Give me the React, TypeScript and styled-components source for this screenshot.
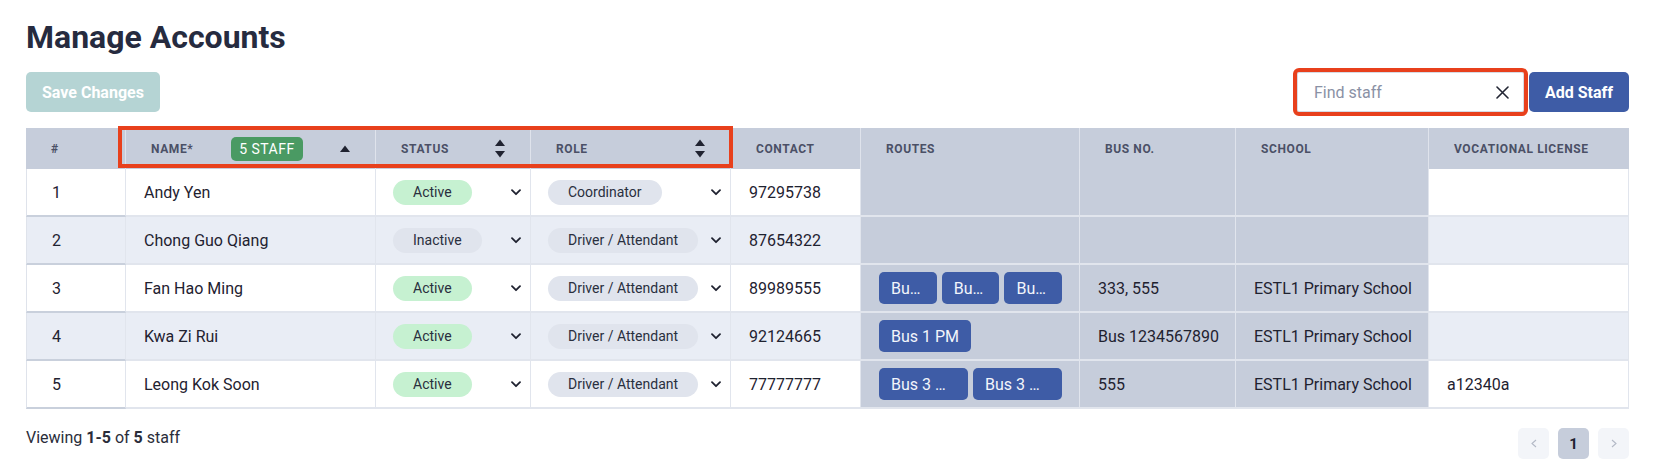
import React from "react";
import styled, { createGlobalStyle } from "styled-components";

const GlobalStyle = createGlobalStyle`
  html, body { margin: 0; padding: 0; background: #ffffff; }
  body {
    font-family: Roboto, "Noto Sans", "Liberation Sans", sans-serif;
    color: #1f2230;
    -webkit-font-smoothing: antialiased;
  }
  * { box-sizing: border-box; }
`;

const COLUMNS = "100px 250px 155px 200px 130px 219px 156px 193px 200px";

const Page = styled.div`
  padding: 18px 28px 0 26px;
  width: 1657px;
`;

const Title = styled.h1`
  margin: 0;
  font-size: 32px;
  line-height: 38px;
  font-weight: 700;
  color: #262b3f;
`;

const Toolbar = styled.div`
  margin-top: 16px;
  height: 40px;
  display: flex;
  align-items: center;
  justify-content: space-between;
`;

const SaveButton = styled.button`
  height: 40px;
  padding: 0 16px;
  border: none;
  border-radius: 5px;
  background: #b5d4d4;
  color: #ffffff;
  font-family: inherit;
  font-size: 16px;
  font-weight: 700;
`;

const ToolGroup = styled.div`
  display: flex;
  align-items: center;
  gap: 5px;
`;

const SearchBox = styled.div`
  width: 227px;
  height: 40px;
  display: flex;
  align-items: center;
  padding: 0 14px 0 16px;
  border: 1px solid #d6dae3;
  border-radius: 2px;
  background: #ffffff;
  outline: 4px solid #e8401c;
  outline-offset: 0;
`;

const SearchInput = styled.input`
  flex: 1;
  min-width: 0;
  border: none;
  outline: none;
  background: transparent;
  font-family: inherit;
  font-size: 16px;
  color: #1f2230;
  padding: 0;
  &::placeholder { color: #8a91a5; }
`;

const AddButton = styled.button`
  height: 40px;
  padding: 0 16px;
  border: none;
  border-radius: 5px;
  background: #3e5ca6;
  color: #ffffff;
  font-family: inherit;
  font-size: 16px;
  font-weight: 700;
`;

const TableWrap = styled.div`
  position: relative;
  margin-top: 16px;
`;

const HeaderRow = styled.div`
  display: grid;
  grid-template-columns: ${COLUMNS};
  height: 41px;
  background: #c6cddb;
`;

const HeaderCell = styled.div`
  display: flex;
  align-items: center;
  padding: 0 25px;
  border-right: 1px solid #dfe3ec;
  font-size: 12px;
  font-weight: 700;
  letter-spacing: 0.05em;
  text-transform: uppercase;
  color: #4b5066;
  white-space: nowrap;
  &:last-child { border-right: none; }
`;

const CountBadge = styled.span`
  margin-left: 38px;
  height: 24px;
  display: inline-flex;
  align-items: center;
  padding: 0 8px;
  border-radius: 5px;
  background: #4a9a63;
  color: #ffffff;
  font-size: 14px;
  font-weight: 400;
  letter-spacing: 0.45px;
`;

const SortSlot = styled.span`
  margin-left: auto;
  display: inline-flex;
  align-items: center;
`;

const Highlight = styled.div`
  position: absolute;
  left: 92px;
  top: -2px;
  width: 615px;
  height: 42px;
  border: 4px solid #e8401c;
  pointer-events: none;
`;

const BodyRow = styled.div`
  display: grid;
  grid-template-columns: ${COLUMNS};
  height: 48px;
`;

type Tone = "index" | "plain" | "muted";

const Cell = styled.div<{ $tone: Tone; $striped: boolean }>`
  display: flex;
  align-items: center;
  min-width: 0;
  padding: ${(p) => (p.$tone === "index" ? "0 25px" : "0 17px 0 18px")};
  background: ${(p) =>
    p.$tone === "muted" ? "#c6cddb" : p.$striped ? "#e9edf5" : "#ffffff"};
  border-bottom: 2px solid
    ${(p) => (p.$tone === "index" ? "#c9d0dc" : "#e1e5ed")};
  border-right: 1px solid #e1e5ed;
  border-left: ${(p) => (p.$tone === "index" ? "1px solid #dfe3eb" : "none")};
  font-size: 16px;
  color: #1f2230;
  white-space: nowrap;
  gap: 5px;
`;

const SelectCell = styled(Cell)`
  padding-left: 17px;
  padding-right: 9px;
`;

const Pill = styled.span<{ $kind: "active" | "neutral" }>`
  height: 25px;
  display: inline-flex;
  align-items: center;
  padding: 0 20px;
  border-radius: 13px;
  background: ${(p) => (p.$kind === "active" ? "#c6f1d1" : "#e0e4ed")};
  color: #2a2f3e;
  font-size: 14px;
`;

const Chevron = styled.svg`
  margin-left: auto;
  flex: none;
`;

const RouteTag = styled.span`
  flex: 0 1 auto;
  min-width: 0;
  height: 32px;
  display: inline-flex;
  align-items: center;
  padding: 0 12px;
  border-radius: 5px;
  background: #3e5ca6;
  color: #f2f5fb;
  font-size: 16px;
  overflow: hidden;
  span {
    overflow: hidden;
    text-overflow: ellipsis;
    white-space: nowrap;
  }
`;

const Footer = styled.div`
  margin-top: 19px;
  display: flex;
  align-items: flex-start;
  justify-content: space-between;
`;

const Summary = styled.div`
  font-size: 16px;
  line-height: 20px;
  color: #2a2d3a;
  b { font-weight: 700; }
`;

const Pager = styled.div`
  display: flex;
  gap: 9px;
`;

const PageButton = styled.button<{ $active?: boolean }>`
  width: 31px;
  height: 31px;
  padding: 0;
  border: none;
  border-radius: 5px;
  display: flex;
  align-items: center;
  justify-content: center;
  background: ${(p) => (p.$active ? "#c6cddb" : "#f3f5f9")};
  color: ${(p) => (p.$active ? "#1f2230" : "#b3b9c6")};
  font-family: inherit;
  font-size: 15px;
  font-weight: 700;
`;

const SortUp = () => (
  <svg width="10" height="8" viewBox="0 0 10 8">
    <polygon points="0,7 5,0.5 10,7" fill="#1f2230" />
  </svg>
);

const SortBoth = () => (
  <svg width="10" height="19" viewBox="0 0 10 19">
    <polygon points="0,7 5,0.5 10,7" fill="#1f2230" />
    <polygon points="0,12 10,12 5,18.5" fill="#1f2230" />
  </svg>
);

const Caret = () => (
  <Chevron width="10" height="7" viewBox="0 0 10 7">
    <polyline
      points="1,1.2 5,5.2 9,1.2"
      fill="none"
      stroke="#1f2230"
      strokeWidth="1.8"
      strokeLinecap="round"
      strokeLinejoin="round"
    />
  </Chevron>
);

const CloseIcon = () => (
  <svg width="13" height="13" viewBox="0 0 13 13">
    <path d="M1 1 L12 12 M12 1 L1 12" stroke="#222533" strokeWidth="1.6" strokeLinecap="round" />
  </svg>
);

const PagerArrow = ({ dir }: { dir: "left" | "right" }) => (
  <svg width="6" height="9" viewBox="0 0 6 9">
    <polyline
      points={dir === "left" ? "5,1 1,4.5 5,8" : "1,1 5,4.5 1,8"}
      fill="none"
      stroke="#b3b9c6"
      strokeWidth="1.1"
    />
  </svg>
);

type Staff = {
  name: string;
  active: boolean;
  role: string;
  contact: string;
  routes: string[];
  bus: string;
  school: string;
  license: string;
};

const staff: Staff[] = [
  { name: "Andy Yen", active: true, role: "Coordinator", contact: "97295738", routes: [], bus: "", school: "", license: "" },
  { name: "Chong Guo Qiang", active: false, role: "Driver / Attendant", contact: "87654322", routes: [], bus: "", school: "", license: "" },
  { name: "Fan Hao Ming", active: true, role: "Driver / Attendant", contact: "89989555", routes: ["Bus 333 AM", "Bus 555 AM", "Bus 333 PM"], bus: "333, 555", school: "ESTL1 Primary School", license: "" },
  { name: "Kwa Zi Rui", active: true, role: "Driver / Attendant", contact: "92124665", routes: ["Bus 1 PM"], bus: "Bus 1234567890", school: "ESTL1 Primary School", license: "" },
  { name: "Leong Kok Soon", active: true, role: "Driver / Attendant", contact: "77777777", routes: ["Bus 3 Weekday AM", "Bus 3 Weekday PM"], bus: "555", school: "ESTL1 Primary School", license: "a12340a" },
];

export default function App() {
  return (
    <>
      <GlobalStyle />
      <Page>
        <Title>Manage Accounts</Title>
        <Toolbar>
          <SaveButton>Save Changes</SaveButton>
          <ToolGroup>
            <SearchBox>
              <SearchInput placeholder="Find staff" />
              <CloseIcon />
            </SearchBox>
            <AddButton>Add Staff</AddButton>
          </ToolGroup>
        </Toolbar>

        <TableWrap>
          <HeaderRow>
            <HeaderCell>#</HeaderCell>
            <HeaderCell>
              Name*
              <CountBadge>5 STAFF</CountBadge>
              <SortSlot><SortUp /></SortSlot>
            </HeaderCell>
            <HeaderCell>
              Status
              <SortSlot><SortBoth /></SortSlot>
            </HeaderCell>
            <HeaderCell>
              Role
              <SortSlot><SortBoth /></SortSlot>
            </HeaderCell>
            <HeaderCell>Contact</HeaderCell>
            <HeaderCell>Routes</HeaderCell>
            <HeaderCell>Bus No.</HeaderCell>
            <HeaderCell>School</HeaderCell>
            <HeaderCell>Vocational License</HeaderCell>
          </HeaderRow>
          {staff.map((s, i) => {
            const striped = i % 2 === 1;
            return (
              <BodyRow key={s.name}>
                <Cell $tone="index" $striped={striped}>{i + 1}</Cell>
                <Cell $tone="plain" $striped={striped}>{s.name}</Cell>
                <SelectCell $tone="plain" $striped={striped}>
                  <Pill $kind={s.active ? "active" : "neutral"}>
                    {s.active ? "Active" : "Inactive"}
                  </Pill>
                  <Caret />
                </SelectCell>
                <SelectCell $tone="plain" $striped={striped}>
                  <Pill $kind="neutral">{s.role}</Pill>
                  <Caret />
                </SelectCell>
                <Cell $tone="plain" $striped={striped}>{s.contact}</Cell>
                <Cell $tone="muted" $striped={striped}>
                  {s.routes.map((r, k) => (
                    <RouteTag key={k}><span>{r}</span></RouteTag>
                  ))}
                </Cell>
                <Cell $tone="muted" $striped={striped}>{s.bus}</Cell>
                <Cell $tone="muted" $striped={striped}>{s.school}</Cell>
                <Cell $tone="plain" $striped={striped}>{s.license}</Cell>
              </BodyRow>
            );
          })}
          <Highlight />
        </TableWrap>

        <Footer>
          <Summary>
            Viewing <b>1-5</b> of <b>5</b> staff
          </Summary>
          <Pager>
            <PageButton><PagerArrow dir="left" /></PageButton>
            <PageButton $active>1</PageButton>
            <PageButton><PagerArrow dir="right" /></PageButton>
          </Pager>
        </Footer>
      </Page>
    </>
  );
}
